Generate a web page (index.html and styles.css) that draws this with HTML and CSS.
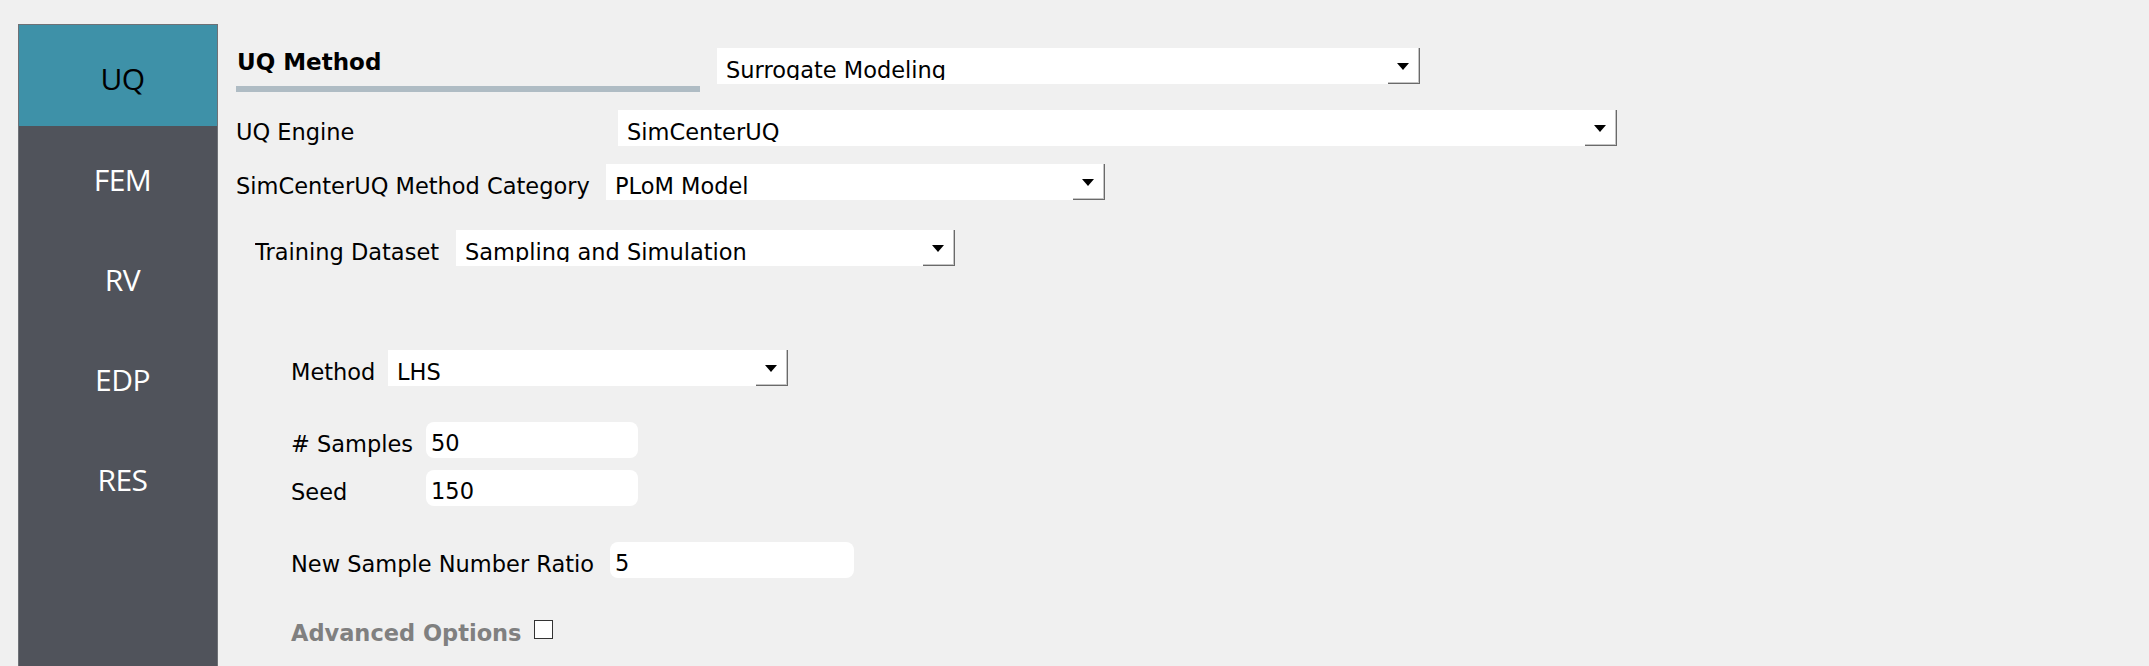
FILE: index.html
```html
<!DOCTYPE html>
<html lang="en">
<head>
<meta charset="utf-8">
<title>UQ Method</title>
<link rel="stylesheet" href="styles.css">
</head>
<body>
<div class="app">
  <nav class="sidebar">
    <div class="nav-item active">UQ</div>
    <div class="nav-item">FEM</div>
    <div class="nav-item">RV</div>
    <div class="nav-item">EDP</div>
    <div class="nav-item">RES</div>
  </nav>
  <main class="panel">
    <div class="row row-head">
      <div class="section-head">
        <div class="section-title">UQ Method</div>
        <div class="section-bar"></div>
      </div>
      <div class="combo combo-uqmethod"><span class="combo-text">Surrogate Modeling</span><span class="combo-btn"><span class="caret"></span></span></div>
    </div>

    <div class="row row-engine">
      <span class="label label-engine">UQ Engine</span>
      <div class="combo combo-engine"><span class="combo-text">SimCenterUQ</span><span class="combo-btn"><span class="caret"></span></span></div>
    </div>

    <div class="row row-category">
      <span class="label label-category">SimCenterUQ Method Category</span>
      <div class="combo combo-category"><span class="combo-text">PLoM Model</span><span class="combo-btn"><span class="caret"></span></span></div>
    </div>

    <div class="row row-dataset">
      <span class="label label-dataset">Training Dataset</span>
      <div class="combo combo-dataset"><span class="combo-text">Sampling and Simulation</span><span class="combo-btn"><span class="caret"></span></span></div>
    </div>

    <div class="row row-sub row-method">
      <span class="label label-method">Method</span>
      <div class="combo combo-method"><span class="combo-text">LHS</span><span class="combo-btn"><span class="caret"></span></span></div>
    </div>

    <div class="row row-sub row-samples">
      <span class="label label-samples"># Samples</span>
      <div class="field field-samples"><span class="field-text">50</span></div>
    </div>

    <div class="row row-sub row-seed">
      <span class="label label-samples">Seed</span>
      <div class="field field-samples"><span class="field-text">150</span></div>
    </div>

    <div class="row row-sub row-ratio">
      <span class="label label-ratio">New Sample Number Ratio</span>
      <div class="field field-ratio"><span class="field-text">5</span></div>
    </div>

    <div class="row row-sub row-advanced">
      <span class="advanced-label">Advanced Options</span>
      <span class="checkbox"></span>
    </div>
  </main>
</div>
</body>
</html>
```

FILE: styles.css
```css
html, body {
  margin: 0;
  padding: 0;
  height: 666px;
  overflow: hidden;
  background: #f0f0f0;
}

.app {
  display: flex;
  align-items: flex-start;
  height: 666px;
  overflow: hidden;
  font-family: "DejaVu Sans", "Liberation Sans", sans-serif;
  font-size: 22.5px;
  color: #000;
}

/* ---------- sidebar ---------- */
.sidebar {
  margin-left: 18px;
  margin-top: 24px;
  width: 200px;
  height: 642px;
  box-sizing: border-box;
  border: 1px solid #6e7176;
  border-bottom: none;
  background: #50535b;
  display: flex;
  flex-direction: column;
}

.nav-item {
  height: 100px;
  display: flex;
  align-items: center;
  justify-content: center;
  box-sizing: border-box;
  padding-left: 9px;
  padding-top: 6px;
  font-family: "Open Sans", "Noto Sans", sans-serif;
  font-size: 30px;
  letter-spacing: -0.5px;
  color: #ffffff;
}

.nav-item.active {
  height: 101px;
  background: #3e91a8;
  color: #000000;
}

/* ---------- panel ---------- */
.panel {
  margin-left: 18px;
  display: flex;
  flex-direction: column;
}

.row {
  display: flex;
  align-items: flex-start;
}

.row-head { margin-top: 48px; gap: 17px; }
.row-engine { margin-top: 18px; }
.row-category { margin-top: 18px; }
.row-dataset { margin-top: 30px; padding-left: 19px; }
.row-sub { padding-left: 55px; }
.row-method { margin-top: 84px; }
.row-samples { margin-top: 36px; }
.row-seed { margin-top: 12px; }
.row-ratio { margin-top: 36px; }
.row-advanced { margin-top: 42px; gap: 12px; }

.section-head {
  width: 464px;
  display: flex;
  flex-direction: column;
}

.section-title {
  margin-top: 1px;
  padding-left: 1px;
  font-weight: bold;
  font-size: 23px;
  line-height: 27px;
}

.section-bar {
  margin-top: 10px;
  height: 6px;
  background: #afbcc4;
}

.label {
  display: block;
  padding-top: 9px;
  line-height: 26px;
  white-space: nowrap;
  overflow: hidden;
}

.label-engine { width: 382px; }
.label-category { width: 370px; }
.label-dataset { width: 201px; }
.label-method { width: 97px; }
.label-samples { width: 135px; }
.label-ratio { width: 307px; margin-right: 12px; }

/* ---------- combo boxes ---------- */
.combo {
  display: flex;
  height: 36px;
  background: #ffffff;
  box-sizing: border-box;
}

.combo-uqmethod { width: 703px; }
.combo-engine { width: 999px; }
.combo-category { width: 499px; }
.combo-dataset { width: 499px; }
.combo-method { width: 400px; }

.combo-text {
  flex: 1;
  display: block;
  padding-left: 9px;
  margin-top: 9px;
  height: 23px;
  line-height: 26px;
  overflow: hidden;
  white-space: nowrap;
}

.combo-btn {
  width: 32px;
  height: 36px;
  display: flex;
  align-items: center;
  justify-content: center;
  box-sizing: border-box;
  padding-right: 2px;
  box-shadow: inset -1px -1px 0 #6a6a6a, inset -2px -2px 0 #c4c4c4;
}

.caret {
  width: 0;
  height: 0;
  border-left: 6px solid transparent;
  border-right: 6px solid transparent;
  border-top: 7px solid #000000;
}

/* ---------- line edits ---------- */
.field {
  height: 36px;
  background: #ffffff;
  border-radius: 8px;
  box-sizing: border-box;
  padding-left: 5px;
}

.field-samples { width: 212px; }
.field-ratio { width: 244px; }

.field-text {
  display: block;
  padding-top: 8px;
  line-height: 26px;
  white-space: nowrap;
}

/* ---------- advanced ---------- */
.advanced-label {
  display: block;
  font-weight: bold;
  line-height: 26px;
  color: #808080;
  white-space: nowrap;
}

.checkbox {
  display: block;
  width: 19px;
  height: 19px;
  box-sizing: border-box;
  border: 1px solid #333333;
  background: #ffffff;
}
```
